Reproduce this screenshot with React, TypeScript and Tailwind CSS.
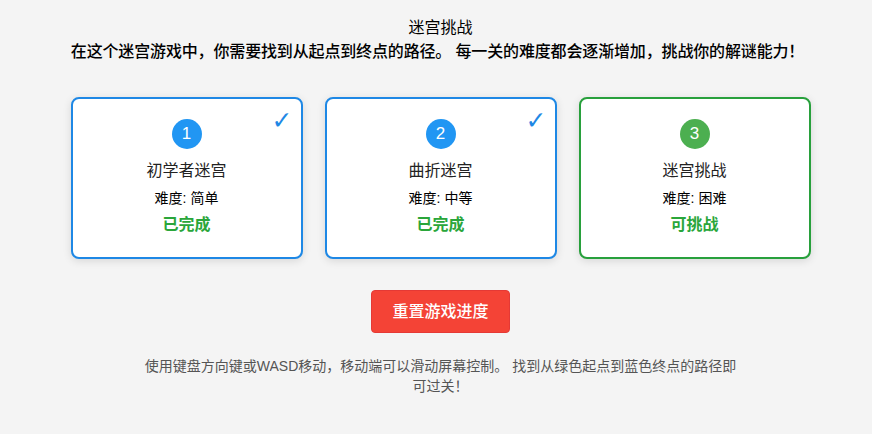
const levels = [
  { id: 1, name: "初学者迷宫", difficulty: "简单", status: "已完成", done: true },
  { id: 2, name: "曲折迷宫", difficulty: "中等", status: "已完成", done: true },
  { id: 3, name: "迷宫挑战", difficulty: "困难", status: "可挑战", done: false },
];

export default function App() {
  return (
    <div className="min-h-screen bg-[#f4f4f4] text-black font-['Liberation_Sans','Noto_Sans_CJK_SC',sans-serif]">
      <div className="flex flex-col items-center pt-4">
        <h1 className="pl-[9px] text-[16px] leading-6 font-normal">迷宫挑战</h1>
        <p className="pl-[3px] text-[16px] leading-6 font-medium tracking-[-0.15px]">
          在这个迷宫游戏中，你需要找到从起点到终点的路径。 每一关的难度都会逐渐增加，挑战你的解谜能力！
        </p>

        <div className="flex flex-col items-center pl-[9px]">
          {/* Level cards */}
          <div className="grid grid-cols-3 gap-[22px] w-[740px] mt-[33px]">
            {levels.map((lv) => (
              <div
                key={lv.id}
                className={
                  lv.done
                    ? "relative h-[162px] bg-white rounded-[8px] border-2 border-[#1e88e5] shadow-[0_2px_8px_rgba(0,0,0,0.12)] flex flex-col items-center pt-5"
                    : "relative h-[162px] bg-white rounded-[8px] border-2 border-[#28a03c] shadow-[0_2px_8px_rgba(0,0,0,0.12)] flex flex-col items-center pt-5"
                }
              >
                {lv.done && (
                  <span className="absolute right-[8px] top-[10px] text-[25px] leading-6 text-[#1e88e5] font-['DejaVu_Sans',sans-serif]">
                    ✓
                  </span>
                )}
                <div
                  className={
                    lv.done
                      ? "w-[30px] h-[30px] rounded-full bg-[#2196f3] text-white text-[17px] flex items-center justify-center"
                      : "w-[30px] h-[30px] rounded-full bg-[#4caf50] text-white text-[17px] flex items-center justify-center"
                  }
                >
                  {lv.id}
                </div>
                <div className="mt-[10px] text-[16px] leading-6 text-[#222]">{lv.name}</div>
                <div className="mt-[5px] text-[14px] leading-5">难度: {lv.difficulty}</div>
                <div className="mt-[5px] text-[16px] leading-6 font-bold text-[#2aa63a]">{lv.status}</div>
              </div>
            ))}
          </div>

          <button className="mt-[31px] h-[43px] px-5 rounded-[4px] bg-[#f44336] border border-[#e53935] text-white text-[16px] font-medium">
            重置游戏进度
          </button>

          <p className="mt-[23px] w-[600px] text-center text-[14px] leading-5 text-[#555]">
            使用键盘方向键或WASD移动，移动端可以滑动屏幕控制。 找到从绿色起点到蓝色终点的路径即可过关！
          </p>
        </div>
      </div>
    </div>
  );
}
